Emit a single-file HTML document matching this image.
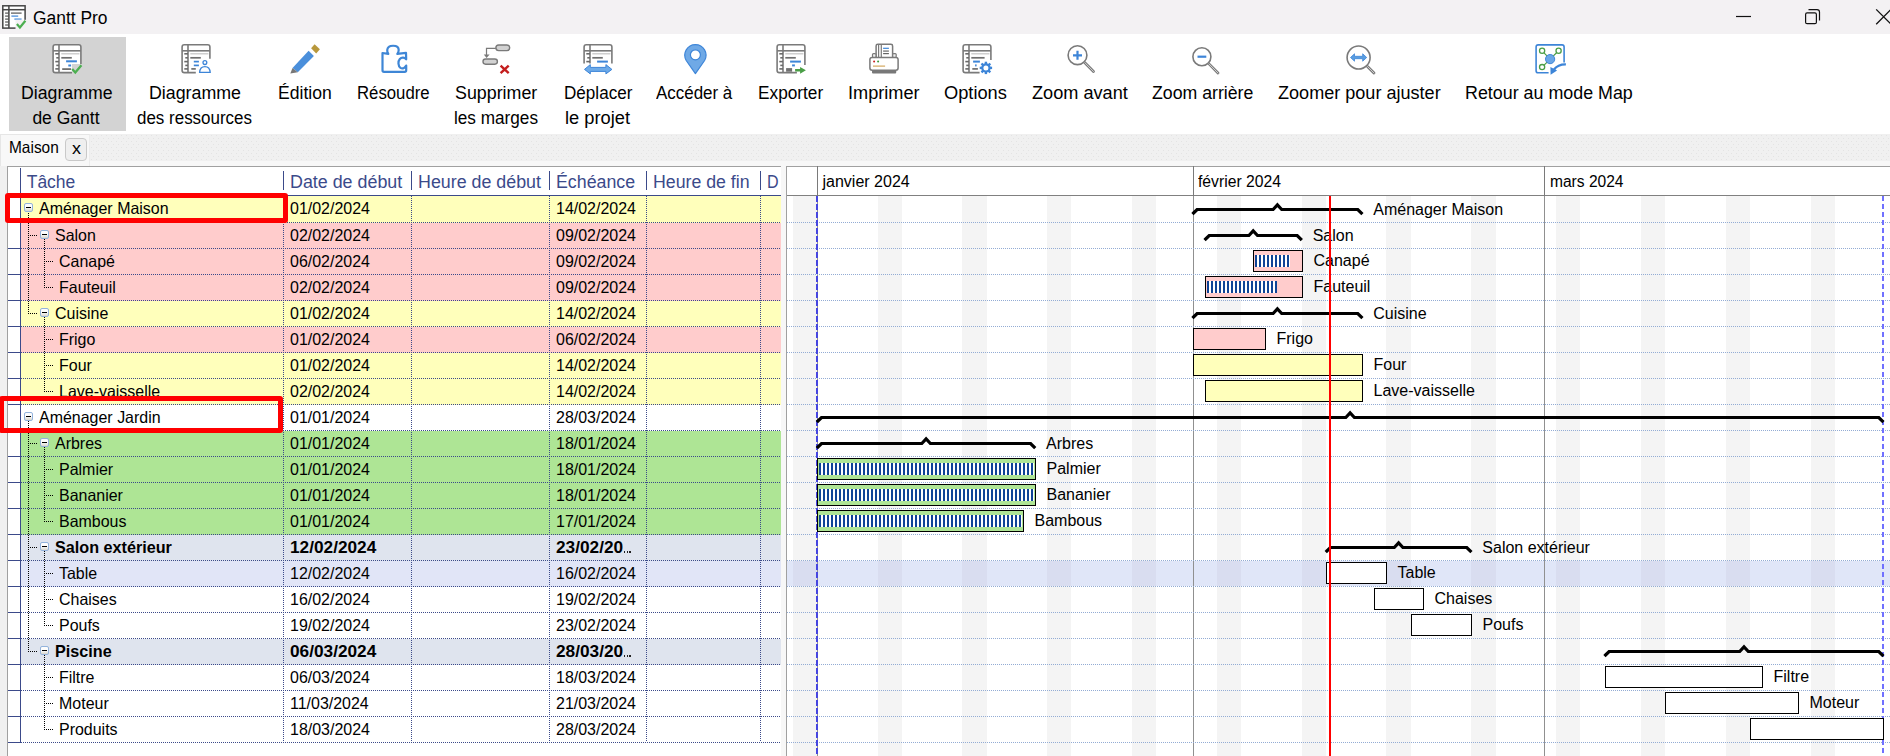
<!DOCTYPE html>
<html><head><meta charset="utf-8"><style>
html,body{margin:0;padding:0;width:1890px;height:756px;overflow:hidden;background:#fff;position:relative}
.t{position:absolute;font-family:"Liberation Sans",sans-serif;line-height:1;white-space:nowrap;transform-origin:0 0;z-index:5}
.mb{position:absolute;width:9px;height:9px;box-sizing:border-box;border:1px solid #93b3dc;border-radius:2px;background:linear-gradient(#fdfdfd 45%,#d9d6cc);z-index:2}
.mb::after{content:"";position:absolute;left:1px;top:3px;width:5px;height:1px;background:#000}
</style></head><body>
<div style="position:absolute;left:0px;top:0px;width:1890px;height:34px;background:#f3f1f3"></div>
<div class="t" style="left:32.60px;top:9.06px;font-size:18px;color:#000;transform:scaleX(0.9671);">Gantt Pro</div>
<div style="position:absolute;left:0px;top:34px;width:1890px;height:100px;background:#fff"></div>
<div style="position:absolute;left:9px;top:37px;width:117px;height:94px;background:#d3d3d3"></div>
<div class="t" style="left:21.15px;top:85.49px;font-size:17.5px;color:#000;transform:scaleX(1.0117);">Diagramme</div>
<div class="t" style="left:32.40px;top:110.49px;font-size:17.5px;color:#000;">de Gantt</div>
<div class="t" style="left:148.70px;top:85.49px;font-size:17.5px;color:#000;transform:scaleX(1.0172);">Diagramme</div>
<div class="t" style="left:137.40px;top:110.49px;font-size:17.5px;color:#000;transform:scaleX(0.9691);">des ressources</div>
<div class="t" style="left:277.85px;top:85.49px;font-size:17.5px;color:#000;transform:scaleX(1.0035);">Édition</div>
<div class="t" style="left:356.90px;top:85.49px;font-size:17.5px;color:#000;transform:scaleX(0.9568);">Résoudre</div>
<div class="t" style="left:455.35px;top:85.49px;font-size:17.5px;color:#000;transform:scaleX(1.0195);">Supprimer</div>
<div class="t" style="left:454.20px;top:110.49px;font-size:17.5px;color:#000;transform:scaleX(0.9814);">les marges</div>
<div class="t" style="left:563.60px;top:85.49px;font-size:17.5px;color:#000;transform:scaleX(0.9766);">Déplacer</div>
<div class="t" style="left:565.20px;top:110.49px;font-size:17.5px;color:#000;transform:scaleX(1.0440);">le projet</div>
<div class="t" style="left:656.35px;top:85.49px;font-size:17.5px;color:#000;transform:scaleX(0.9683);">Accéder à</div>
<div class="t" style="left:757.80px;top:85.49px;font-size:17.5px;color:#000;transform:scaleX(0.9858);">Exporter</div>
<div class="t" style="left:847.90px;top:85.49px;font-size:17.5px;color:#000;transform:scaleX(1.0372);">Imprimer</div>
<div class="t" style="left:944.45px;top:85.49px;font-size:17.5px;color:#000;transform:scaleX(1.0429);">Options</div>
<div class="t" style="left:1031.90px;top:85.49px;font-size:17.5px;color:#000;transform:scaleX(1.0367);">Zoom avant</div>
<div class="t" style="left:1151.95px;top:85.49px;font-size:17.5px;color:#000;transform:scaleX(1.0113);">Zoom arrière</div>
<div class="t" style="left:1277.85px;top:85.49px;font-size:17.5px;color:#000;transform:scaleX(1.0325);">Zoomer pour ajuster</div>
<div class="t" style="left:1465.20px;top:85.49px;font-size:17.5px;color:#000;transform:scaleX(1.0207);">Retour au mode Map</div>
<div style="position:absolute;left:0px;top:134px;width:1890px;height:32px;background:#f0f0f0"></div>
<div style="position:absolute;left:90px;top:161px;width:1800px;height:5px;background:#f7f7f7"></div>
<svg style="position:absolute;left:90px;top:134px" width="1800" height="27"><defs><pattern id="dp" width="5" height="6" patternUnits="userSpaceOnUse"><rect x="1" y="1" width="1" height="1" fill="#e3e3e3"/><rect x="3" y="4" width="1" height="1" fill="#e3e3e3"/></pattern></defs><rect width="1800" height="27" fill="url(#dp)"/></svg>
<div style="position:absolute;left:0px;top:134px;width:90px;height:32px;background:#f8f8f8;border-top:1px solid #e6e6e6;border-left:1px solid #e6e6e6;border-right:1px solid #ececec;box-sizing:border-box"></div>
<div class="t" style="left:8.60px;top:139.03px;font-size:16.5px;color:#000;transform:scaleX(0.9362);">Maison</div>
<div style="position:absolute;left:65px;top:138px;width:20px;height:21px;background:#efefef;border:1px solid #c9c9c9;border-radius:4px"></div>
<div class="t" style="left:71.50px;top:140.03px;font-size:16.5px;color:#000;transform:scaleX(1.0909);">x</div>
<div style="position:absolute;left:0px;top:166px;width:7px;height:590px;background:#f0f0f0"></div>
<div style="position:absolute;left:7px;top:166px;width:774px;height:1px;background:#a0a0a0"></div>
<div style="position:absolute;left:7px;top:166px;width:1px;height:590px;background:#a0a0a0"></div>
<div style="position:absolute;left:8px;top:167px;width:773px;height:589px;background:#fff"></div>
<div style="position:absolute;left:21px;top:196px;width:760px;height:27px;background:#ffffbb"></div>
<div style="position:absolute;left:21px;top:223px;width:760px;height:26px;background:#ffcccc"></div>
<div style="position:absolute;left:21px;top:249px;width:760px;height:26px;background:#ffcccc"></div>
<div style="position:absolute;left:21px;top:275px;width:760px;height:26px;background:#ffcccc"></div>
<div style="position:absolute;left:21px;top:301px;width:760px;height:26px;background:#ffffbb"></div>
<div style="position:absolute;left:21px;top:327px;width:760px;height:26px;background:#ffcccc"></div>
<div style="position:absolute;left:21px;top:353px;width:760px;height:26px;background:#ffffbb"></div>
<div style="position:absolute;left:21px;top:379px;width:760px;height:26px;background:#ffffbb"></div>
<div style="position:absolute;left:21px;top:405px;width:760px;height:26px;background:#ffffff"></div>
<div style="position:absolute;left:21px;top:431px;width:760px;height:26px;background:#aee595"></div>
<div style="position:absolute;left:21px;top:457px;width:760px;height:26px;background:#aee595"></div>
<div style="position:absolute;left:21px;top:483px;width:760px;height:26px;background:#aee595"></div>
<div style="position:absolute;left:21px;top:509px;width:760px;height:26px;background:#aee595"></div>
<div style="position:absolute;left:21px;top:535px;width:760px;height:26px;background:#dfe4ee"></div>
<div style="position:absolute;left:21px;top:561px;width:760px;height:26px;background:#e1e5f7"></div>
<div style="position:absolute;left:21px;top:587px;width:760px;height:26px;background:#ffffff"></div>
<div style="position:absolute;left:21px;top:613px;width:760px;height:26px;background:#ffffff"></div>
<div style="position:absolute;left:21px;top:639px;width:760px;height:26px;background:#dfe4ee"></div>
<div style="position:absolute;left:21px;top:665px;width:760px;height:26px;background:#ffffff"></div>
<div style="position:absolute;left:21px;top:691px;width:760px;height:26px;background:#ffffff"></div>
<div style="position:absolute;left:21px;top:717px;width:760px;height:26px;background:#ffffff"></div>
<div class="t" style="left:26.70px;top:173.89px;font-size:17.5px;color:#3b4a8a;">Tâche</div>
<div class="t" style="left:289.80px;top:173.89px;font-size:17.5px;color:#3b4a8a;transform:scaleX(1.0205);">Date de début</div>
<div class="t" style="left:417.80px;top:173.89px;font-size:17.5px;color:#3b4a8a;transform:scaleX(1.0195);">Heure de début</div>
<div class="t" style="left:555.70px;top:173.89px;font-size:17.5px;color:#3b4a8a;transform:scaleX(1.0162);">Échéance</div>
<div class="t" style="left:653.00px;top:173.89px;font-size:17.5px;color:#3b4a8a;transform:scaleX(1.0132);">Heure de fin</div>
<div class="t" style="left:766.60px;top:173.89px;font-size:17.5px;color:#3b4a8a;transform:scaleX(0.9178);">D</div>
<div style="position:absolute;left:283px;top:171px;width:1px;height:19px;background:#3b4a8a"></div>
<div style="position:absolute;left:411px;top:171px;width:1px;height:19px;background:#3b4a8a"></div>
<div style="position:absolute;left:549px;top:171px;width:1px;height:19px;background:#3b4a8a"></div>
<div style="position:absolute;left:646px;top:171px;width:1px;height:19px;background:#3b4a8a"></div>
<div style="position:absolute;left:760px;top:171px;width:1px;height:19px;background:#3b4a8a"></div>
<div style="position:absolute;left:8px;top:195px;width:773px;height:1px;background:#3b4a8a"></div>
<div style="position:absolute;left:20px;top:168px;width:1px;height:575px;background:#3b4a8a"></div>
<div style="position:absolute;left:21px;top:222px;width:760px;height:1px;background-image:linear-gradient(90deg,#3b4a8a 50%,transparent 50%);background-size:2px 1px"></div>
<div style="position:absolute;left:8px;top:222px;width:12px;height:1px;background:#3b4a8a"></div>
<div style="position:absolute;left:21px;top:248px;width:760px;height:1px;background-image:linear-gradient(90deg,#3b4a8a 50%,transparent 50%);background-size:2px 1px"></div>
<div style="position:absolute;left:8px;top:248px;width:12px;height:1px;background:#3b4a8a"></div>
<div style="position:absolute;left:21px;top:274px;width:760px;height:1px;background-image:linear-gradient(90deg,#3b4a8a 50%,transparent 50%);background-size:2px 1px"></div>
<div style="position:absolute;left:8px;top:274px;width:12px;height:1px;background:#3b4a8a"></div>
<div style="position:absolute;left:21px;top:300px;width:760px;height:1px;background-image:linear-gradient(90deg,#3b4a8a 50%,transparent 50%);background-size:2px 1px"></div>
<div style="position:absolute;left:8px;top:300px;width:12px;height:1px;background:#3b4a8a"></div>
<div style="position:absolute;left:21px;top:326px;width:760px;height:1px;background-image:linear-gradient(90deg,#3b4a8a 50%,transparent 50%);background-size:2px 1px"></div>
<div style="position:absolute;left:8px;top:326px;width:12px;height:1px;background:#3b4a8a"></div>
<div style="position:absolute;left:21px;top:352px;width:760px;height:1px;background-image:linear-gradient(90deg,#3b4a8a 50%,transparent 50%);background-size:2px 1px"></div>
<div style="position:absolute;left:8px;top:352px;width:12px;height:1px;background:#3b4a8a"></div>
<div style="position:absolute;left:21px;top:378px;width:760px;height:1px;background-image:linear-gradient(90deg,#3b4a8a 50%,transparent 50%);background-size:2px 1px"></div>
<div style="position:absolute;left:8px;top:378px;width:12px;height:1px;background:#3b4a8a"></div>
<div style="position:absolute;left:21px;top:404px;width:760px;height:1px;background-image:linear-gradient(90deg,#3b4a8a 50%,transparent 50%);background-size:2px 1px"></div>
<div style="position:absolute;left:8px;top:404px;width:12px;height:1px;background:#3b4a8a"></div>
<div style="position:absolute;left:21px;top:430px;width:760px;height:1px;background-image:linear-gradient(90deg,#3b4a8a 50%,transparent 50%);background-size:2px 1px"></div>
<div style="position:absolute;left:8px;top:430px;width:12px;height:1px;background:#3b4a8a"></div>
<div style="position:absolute;left:21px;top:456px;width:760px;height:1px;background-image:linear-gradient(90deg,#3b4a8a 50%,transparent 50%);background-size:2px 1px"></div>
<div style="position:absolute;left:8px;top:456px;width:12px;height:1px;background:#3b4a8a"></div>
<div style="position:absolute;left:21px;top:482px;width:760px;height:1px;background-image:linear-gradient(90deg,#3b4a8a 50%,transparent 50%);background-size:2px 1px"></div>
<div style="position:absolute;left:8px;top:482px;width:12px;height:1px;background:#3b4a8a"></div>
<div style="position:absolute;left:21px;top:508px;width:760px;height:1px;background-image:linear-gradient(90deg,#3b4a8a 50%,transparent 50%);background-size:2px 1px"></div>
<div style="position:absolute;left:8px;top:508px;width:12px;height:1px;background:#3b4a8a"></div>
<div style="position:absolute;left:21px;top:534px;width:760px;height:1px;background-image:linear-gradient(90deg,#3b4a8a 50%,transparent 50%);background-size:2px 1px"></div>
<div style="position:absolute;left:8px;top:534px;width:12px;height:1px;background:#3b4a8a"></div>
<div style="position:absolute;left:21px;top:560px;width:760px;height:1px;background-image:linear-gradient(90deg,#3b4a8a 50%,transparent 50%);background-size:2px 1px"></div>
<div style="position:absolute;left:8px;top:560px;width:12px;height:1px;background:#3b4a8a"></div>
<div style="position:absolute;left:21px;top:586px;width:760px;height:1px;background-image:linear-gradient(90deg,#3b4a8a 50%,transparent 50%);background-size:2px 1px"></div>
<div style="position:absolute;left:8px;top:586px;width:12px;height:1px;background:#3b4a8a"></div>
<div style="position:absolute;left:21px;top:612px;width:760px;height:1px;background-image:linear-gradient(90deg,#3b4a8a 50%,transparent 50%);background-size:2px 1px"></div>
<div style="position:absolute;left:8px;top:612px;width:12px;height:1px;background:#3b4a8a"></div>
<div style="position:absolute;left:21px;top:638px;width:760px;height:1px;background-image:linear-gradient(90deg,#3b4a8a 50%,transparent 50%);background-size:2px 1px"></div>
<div style="position:absolute;left:8px;top:638px;width:12px;height:1px;background:#3b4a8a"></div>
<div style="position:absolute;left:21px;top:664px;width:760px;height:1px;background-image:linear-gradient(90deg,#3b4a8a 50%,transparent 50%);background-size:2px 1px"></div>
<div style="position:absolute;left:8px;top:664px;width:12px;height:1px;background:#3b4a8a"></div>
<div style="position:absolute;left:21px;top:690px;width:760px;height:1px;background-image:linear-gradient(90deg,#3b4a8a 50%,transparent 50%);background-size:2px 1px"></div>
<div style="position:absolute;left:8px;top:690px;width:12px;height:1px;background:#3b4a8a"></div>
<div style="position:absolute;left:21px;top:716px;width:760px;height:1px;background-image:linear-gradient(90deg,#3b4a8a 50%,transparent 50%);background-size:2px 1px"></div>
<div style="position:absolute;left:8px;top:716px;width:12px;height:1px;background:#3b4a8a"></div>
<div style="position:absolute;left:21px;top:742px;width:760px;height:1px;background-image:linear-gradient(90deg,#3b4a8a 50%,transparent 50%);background-size:2px 1px"></div>
<div style="position:absolute;left:8px;top:742px;width:12px;height:1px;background:#3b4a8a"></div>
<div style="position:absolute;left:283px;top:196px;width:1px;height:546px;background-image:linear-gradient(180deg,#3b4a8a 50%,transparent 50%);background-size:1px 2px"></div>
<div style="position:absolute;left:411px;top:196px;width:1px;height:546px;background-image:linear-gradient(180deg,#3b4a8a 50%,transparent 50%);background-size:1px 2px"></div>
<div style="position:absolute;left:549px;top:196px;width:1px;height:546px;background-image:linear-gradient(180deg,#3b4a8a 50%,transparent 50%);background-size:1px 2px"></div>
<div style="position:absolute;left:646px;top:196px;width:1px;height:546px;background-image:linear-gradient(180deg,#3b4a8a 50%,transparent 50%);background-size:1px 2px"></div>
<div style="position:absolute;left:760px;top:196px;width:1px;height:546px;background-image:linear-gradient(180deg,#3b4a8a 50%,transparent 50%);background-size:1px 2px"></div>
<div style="position:absolute;left:28px;top:213px;width:1px;height:100px;background-image:linear-gradient(180deg,#000 50%,transparent 50%);background-size:1px 2px"></div>
<div style="position:absolute;left:28px;top:234.5px;width:10px;height:1px;background-image:linear-gradient(90deg,#000 50%,transparent 50%);background-size:2px 1px"></div>
<div style="position:absolute;left:28px;top:312.5px;width:10px;height:1px;background-image:linear-gradient(90deg,#000 50%,transparent 50%);background-size:2px 1px"></div>
<div style="position:absolute;left:44px;top:239px;width:1px;height:48px;background-image:linear-gradient(180deg,#000 50%,transparent 50%);background-size:1px 2px"></div>
<div style="position:absolute;left:44px;top:260.5px;width:10px;height:1px;background-image:linear-gradient(90deg,#000 50%,transparent 50%);background-size:2px 1px"></div>
<div style="position:absolute;left:44px;top:286.5px;width:10px;height:1px;background-image:linear-gradient(90deg,#000 50%,transparent 50%);background-size:2px 1px"></div>
<div style="position:absolute;left:44px;top:317px;width:1px;height:74px;background-image:linear-gradient(180deg,#000 50%,transparent 50%);background-size:1px 2px"></div>
<div style="position:absolute;left:44px;top:338.5px;width:10px;height:1px;background-image:linear-gradient(90deg,#000 50%,transparent 50%);background-size:2px 1px"></div>
<div style="position:absolute;left:44px;top:364.5px;width:10px;height:1px;background-image:linear-gradient(90deg,#000 50%,transparent 50%);background-size:2px 1px"></div>
<div style="position:absolute;left:44px;top:390.5px;width:10px;height:1px;background-image:linear-gradient(90deg,#000 50%,transparent 50%);background-size:2px 1px"></div>
<div style="position:absolute;left:28px;top:421px;width:1px;height:230px;background-image:linear-gradient(180deg,#000 50%,transparent 50%);background-size:1px 2px"></div>
<div style="position:absolute;left:28px;top:442.5px;width:10px;height:1px;background-image:linear-gradient(90deg,#000 50%,transparent 50%);background-size:2px 1px"></div>
<div style="position:absolute;left:28px;top:546.5px;width:10px;height:1px;background-image:linear-gradient(90deg,#000 50%,transparent 50%);background-size:2px 1px"></div>
<div style="position:absolute;left:28px;top:650.5px;width:10px;height:1px;background-image:linear-gradient(90deg,#000 50%,transparent 50%);background-size:2px 1px"></div>
<div style="position:absolute;left:44px;top:447px;width:1px;height:74px;background-image:linear-gradient(180deg,#000 50%,transparent 50%);background-size:1px 2px"></div>
<div style="position:absolute;left:44px;top:468.5px;width:10px;height:1px;background-image:linear-gradient(90deg,#000 50%,transparent 50%);background-size:2px 1px"></div>
<div style="position:absolute;left:44px;top:494.5px;width:10px;height:1px;background-image:linear-gradient(90deg,#000 50%,transparent 50%);background-size:2px 1px"></div>
<div style="position:absolute;left:44px;top:520.5px;width:10px;height:1px;background-image:linear-gradient(90deg,#000 50%,transparent 50%);background-size:2px 1px"></div>
<div style="position:absolute;left:44px;top:551px;width:1px;height:74px;background-image:linear-gradient(180deg,#000 50%,transparent 50%);background-size:1px 2px"></div>
<div style="position:absolute;left:44px;top:572.5px;width:10px;height:1px;background-image:linear-gradient(90deg,#000 50%,transparent 50%);background-size:2px 1px"></div>
<div style="position:absolute;left:44px;top:598.5px;width:10px;height:1px;background-image:linear-gradient(90deg,#000 50%,transparent 50%);background-size:2px 1px"></div>
<div style="position:absolute;left:44px;top:624.5px;width:10px;height:1px;background-image:linear-gradient(90deg,#000 50%,transparent 50%);background-size:2px 1px"></div>
<div style="position:absolute;left:44px;top:655px;width:1px;height:74px;background-image:linear-gradient(180deg,#000 50%,transparent 50%);background-size:1px 2px"></div>
<div style="position:absolute;left:44px;top:676.5px;width:10px;height:1px;background-image:linear-gradient(90deg,#000 50%,transparent 50%);background-size:2px 1px"></div>
<div style="position:absolute;left:44px;top:702.5px;width:10px;height:1px;background-image:linear-gradient(90deg,#000 50%,transparent 50%);background-size:2px 1px"></div>
<div style="position:absolute;left:44px;top:728.5px;width:10px;height:1px;background-image:linear-gradient(90deg,#000 50%,transparent 50%);background-size:2px 1px"></div>
<div class="mb" style="left:24px;top:203px"></div>
<div class="t" style="left:38.50px;top:200.03px;font-size:16.5px;color:#000;transform:scaleX(0.9680);">Aménager Maison</div>
<div class="t" style="left:289.80px;top:200.03px;font-size:16.5px;color:#000;transform:scaleX(0.9680);">01/02/2024</div>
<div class="t" style="left:555.70px;top:200.03px;font-size:16.5px;color:#000;transform:scaleX(0.9680);">14/02/2024</div>
<div class="mb" style="left:40px;top:230px"></div>
<div class="t" style="left:54.50px;top:227.03px;font-size:16.5px;color:#000;transform:scaleX(0.9680);">Salon</div>
<div class="t" style="left:289.80px;top:227.03px;font-size:16.5px;color:#000;transform:scaleX(0.9680);">02/02/2024</div>
<div class="t" style="left:555.70px;top:227.03px;font-size:16.5px;color:#000;transform:scaleX(0.9680);">09/02/2024</div>
<div class="t" style="left:58.50px;top:253.03px;font-size:16.5px;color:#000;transform:scaleX(0.9680);">Canapé</div>
<div class="t" style="left:289.80px;top:253.03px;font-size:16.5px;color:#000;transform:scaleX(0.9680);">06/02/2024</div>
<div class="t" style="left:555.70px;top:253.03px;font-size:16.5px;color:#000;transform:scaleX(0.9680);">09/02/2024</div>
<div class="t" style="left:58.50px;top:279.03px;font-size:16.5px;color:#000;transform:scaleX(0.9680);">Fauteuil</div>
<div class="t" style="left:289.80px;top:279.03px;font-size:16.5px;color:#000;transform:scaleX(0.9680);">02/02/2024</div>
<div class="t" style="left:555.70px;top:279.03px;font-size:16.5px;color:#000;transform:scaleX(0.9680);">09/02/2024</div>
<div class="mb" style="left:40px;top:308px"></div>
<div class="t" style="left:54.50px;top:305.03px;font-size:16.5px;color:#000;transform:scaleX(0.9680);">Cuisine</div>
<div class="t" style="left:289.80px;top:305.03px;font-size:16.5px;color:#000;transform:scaleX(0.9680);">01/02/2024</div>
<div class="t" style="left:555.70px;top:305.03px;font-size:16.5px;color:#000;transform:scaleX(0.9680);">14/02/2024</div>
<div class="t" style="left:58.50px;top:331.03px;font-size:16.5px;color:#000;transform:scaleX(0.9680);">Frigo</div>
<div class="t" style="left:289.80px;top:331.03px;font-size:16.5px;color:#000;transform:scaleX(0.9680);">01/02/2024</div>
<div class="t" style="left:555.70px;top:331.03px;font-size:16.5px;color:#000;transform:scaleX(0.9680);">06/02/2024</div>
<div class="t" style="left:58.50px;top:357.03px;font-size:16.5px;color:#000;transform:scaleX(0.9680);">Four</div>
<div class="t" style="left:289.80px;top:357.03px;font-size:16.5px;color:#000;transform:scaleX(0.9680);">01/02/2024</div>
<div class="t" style="left:555.70px;top:357.03px;font-size:16.5px;color:#000;transform:scaleX(0.9680);">14/02/2024</div>
<div class="t" style="left:58.50px;top:383.03px;font-size:16.5px;color:#000;transform:scaleX(0.9680);">Lave-vaisselle</div>
<div class="t" style="left:289.80px;top:383.03px;font-size:16.5px;color:#000;transform:scaleX(0.9680);">02/02/2024</div>
<div class="t" style="left:555.70px;top:383.03px;font-size:16.5px;color:#000;transform:scaleX(0.9680);">14/02/2024</div>
<div class="mb" style="left:24px;top:412px"></div>
<div class="t" style="left:38.50px;top:409.03px;font-size:16.5px;color:#000;transform:scaleX(0.9680);">Aménager Jardin</div>
<div class="t" style="left:289.80px;top:409.03px;font-size:16.5px;color:#000;transform:scaleX(0.9680);">01/01/2024</div>
<div class="t" style="left:555.70px;top:409.03px;font-size:16.5px;color:#000;transform:scaleX(0.9680);">28/03/2024</div>
<div class="mb" style="left:40px;top:438px"></div>
<div class="t" style="left:54.50px;top:435.03px;font-size:16.5px;color:#000;transform:scaleX(0.9680);">Arbres</div>
<div class="t" style="left:289.80px;top:435.03px;font-size:16.5px;color:#000;transform:scaleX(0.9680);">01/01/2024</div>
<div class="t" style="left:555.70px;top:435.03px;font-size:16.5px;color:#000;transform:scaleX(0.9680);">18/01/2024</div>
<div class="t" style="left:58.50px;top:461.03px;font-size:16.5px;color:#000;transform:scaleX(0.9680);">Palmier</div>
<div class="t" style="left:289.80px;top:461.03px;font-size:16.5px;color:#000;transform:scaleX(0.9680);">01/01/2024</div>
<div class="t" style="left:555.70px;top:461.03px;font-size:16.5px;color:#000;transform:scaleX(0.9680);">18/01/2024</div>
<div class="t" style="left:58.50px;top:487.03px;font-size:16.5px;color:#000;transform:scaleX(0.9680);">Bananier</div>
<div class="t" style="left:289.80px;top:487.03px;font-size:16.5px;color:#000;transform:scaleX(0.9680);">01/01/2024</div>
<div class="t" style="left:555.70px;top:487.03px;font-size:16.5px;color:#000;transform:scaleX(0.9680);">18/01/2024</div>
<div class="t" style="left:58.50px;top:513.03px;font-size:16.5px;color:#000;transform:scaleX(0.9680);">Bambous</div>
<div class="t" style="left:289.80px;top:513.03px;font-size:16.5px;color:#000;transform:scaleX(0.9680);">01/01/2024</div>
<div class="t" style="left:555.70px;top:513.03px;font-size:16.5px;color:#000;transform:scaleX(0.9680);">17/01/2024</div>
<div class="mb" style="left:40px;top:542px"></div>
<div class="t" style="left:54.50px;top:539.03px;font-size:16.5px;color:#000;font-weight:700;transform:scaleX(0.9800);">Salon extérieur</div>
<div class="t" style="left:289.80px;top:539.03px;font-size:16.5px;color:#000;font-weight:700;transform:scaleX(1.0450);">12/02/2024</div>
<div class="t" style="left:555.70px;top:539.03px;font-size:16.5px;color:#000;font-weight:700;transform:scaleX(1.0450);">23/02/20</div>
<div style="position:absolute;left:624.019125390625px;top:551.4px;width:1.4px;height:1.5px;background:#222;z-index:5"></div>
<div style="position:absolute;left:626.6191253906251px;top:551.4px;width:1.4px;height:1.5px;background:#222;z-index:5"></div>
<div style="position:absolute;left:629.2191253906251px;top:551.4px;width:1.4px;height:1.5px;background:#222;z-index:5"></div>
<div class="t" style="left:58.50px;top:565.03px;font-size:16.5px;color:#000;transform:scaleX(0.9680);">Table</div>
<div class="t" style="left:289.80px;top:565.03px;font-size:16.5px;color:#000;transform:scaleX(0.9680);">12/02/2024</div>
<div class="t" style="left:555.70px;top:565.03px;font-size:16.5px;color:#000;transform:scaleX(0.9680);">16/02/2024</div>
<div class="t" style="left:58.50px;top:591.03px;font-size:16.5px;color:#000;transform:scaleX(0.9680);">Chaises</div>
<div class="t" style="left:289.80px;top:591.03px;font-size:16.5px;color:#000;transform:scaleX(0.9680);">16/02/2024</div>
<div class="t" style="left:555.70px;top:591.03px;font-size:16.5px;color:#000;transform:scaleX(0.9680);">19/02/2024</div>
<div class="t" style="left:58.50px;top:617.03px;font-size:16.5px;color:#000;transform:scaleX(0.9680);">Poufs</div>
<div class="t" style="left:289.80px;top:617.03px;font-size:16.5px;color:#000;transform:scaleX(0.9680);">19/02/2024</div>
<div class="t" style="left:555.70px;top:617.03px;font-size:16.5px;color:#000;transform:scaleX(0.9680);">23/02/2024</div>
<div class="mb" style="left:40px;top:646px"></div>
<div class="t" style="left:54.50px;top:643.03px;font-size:16.5px;color:#000;font-weight:700;transform:scaleX(0.9800);">Piscine</div>
<div class="t" style="left:289.80px;top:643.03px;font-size:16.5px;color:#000;font-weight:700;transform:scaleX(1.0450);">06/03/2024</div>
<div class="t" style="left:555.70px;top:643.03px;font-size:16.5px;color:#000;font-weight:700;transform:scaleX(1.0450);">28/03/20</div>
<div style="position:absolute;left:624.019125390625px;top:655.4px;width:1.4px;height:1.5px;background:#222;z-index:5"></div>
<div style="position:absolute;left:626.6191253906251px;top:655.4px;width:1.4px;height:1.5px;background:#222;z-index:5"></div>
<div style="position:absolute;left:629.2191253906251px;top:655.4px;width:1.4px;height:1.5px;background:#222;z-index:5"></div>
<div class="t" style="left:58.50px;top:669.03px;font-size:16.5px;color:#000;transform:scaleX(0.9680);">Filtre</div>
<div class="t" style="left:289.80px;top:669.03px;font-size:16.5px;color:#000;transform:scaleX(0.9680);">06/03/2024</div>
<div class="t" style="left:555.70px;top:669.03px;font-size:16.5px;color:#000;transform:scaleX(0.9680);">18/03/2024</div>
<div class="t" style="left:58.50px;top:695.03px;font-size:16.5px;color:#000;transform:scaleX(0.9680);">Moteur</div>
<div class="t" style="left:289.80px;top:695.03px;font-size:16.5px;color:#000;transform:scaleX(0.9680);">11/03/2024</div>
<div class="t" style="left:555.70px;top:695.03px;font-size:16.5px;color:#000;transform:scaleX(0.9680);">21/03/2024</div>
<div class="t" style="left:58.50px;top:721.03px;font-size:16.5px;color:#000;transform:scaleX(0.9680);">Produits</div>
<div class="t" style="left:289.80px;top:721.03px;font-size:16.5px;color:#000;transform:scaleX(0.9680);">18/03/2024</div>
<div class="t" style="left:555.70px;top:721.03px;font-size:16.5px;color:#000;transform:scaleX(0.9680);">28/03/2024</div>
<div style="position:absolute;left:5px;top:193px;width:283px;height:30px;border:5px solid #f00;border-radius:3px;box-sizing:border-box;z-index:8"></div>
<div style="position:absolute;left:-1px;top:396px;width:284px;height:37px;border:5px solid #f00;border-radius:3px;box-sizing:border-box;z-index:8"></div>
<div style="position:absolute;left:781px;top:166px;width:5px;height:590px;background:#f7f7f7"></div>
<div style="position:absolute;left:786px;top:166px;width:1px;height:590px;background:#a0a0a0"></div>
<div style="position:absolute;left:787px;top:167px;width:1103px;height:589px;background:#fff"></div>
<div style="position:absolute;left:787px;top:166px;width:1103px;height:1px;background:#a0a0a0"></div>
<div style="position:absolute;left:787px;top:195px;width:1103px;height:1px;background:#808080"></div>
<div style="position:absolute;left:793px;top:196px;width:24px;height:560px;background:#f4f4f4"></div>
<div style="position:absolute;left:878px;top:196px;width:24px;height:560px;background:#f4f4f4"></div>
<div style="position:absolute;left:962px;top:196px;width:25px;height:560px;background:#f4f4f4"></div>
<div style="position:absolute;left:1047px;top:196px;width:24px;height:560px;background:#f4f4f4"></div>
<div style="position:absolute;left:1132px;top:196px;width:24px;height:560px;background:#f4f4f4"></div>
<div style="position:absolute;left:1217px;top:196px;width:24px;height:560px;background:#f4f4f4"></div>
<div style="position:absolute;left:1302px;top:196px;width:24px;height:560px;background:#f4f4f4"></div>
<div style="position:absolute;left:1386px;top:196px;width:25px;height:560px;background:#f4f4f4"></div>
<div style="position:absolute;left:1471px;top:196px;width:25px;height:560px;background:#f4f4f4"></div>
<div style="position:absolute;left:1556px;top:196px;width:24px;height:560px;background:#f4f4f4"></div>
<div style="position:absolute;left:1641px;top:196px;width:24px;height:560px;background:#f4f4f4"></div>
<div style="position:absolute;left:1726px;top:196px;width:24px;height:560px;background:#f4f4f4"></div>
<div style="position:absolute;left:1811px;top:196px;width:24px;height:560px;background:#f4f4f4"></div>
<div style="position:absolute;left:1895px;top:196px;width:25px;height:560px;background:#f4f4f4"></div>
<div style="position:absolute;left:787px;top:561px;width:1103px;height:25px;background:#e0e6f8"></div>
<div style="position:absolute;left:793px;top:561px;width:24px;height:25px;background:#d9ddf0"></div>
<div style="position:absolute;left:878px;top:561px;width:24px;height:25px;background:#d9ddf0"></div>
<div style="position:absolute;left:962px;top:561px;width:25px;height:25px;background:#d9ddf0"></div>
<div style="position:absolute;left:1047px;top:561px;width:24px;height:25px;background:#d9ddf0"></div>
<div style="position:absolute;left:1132px;top:561px;width:24px;height:25px;background:#d9ddf0"></div>
<div style="position:absolute;left:1217px;top:561px;width:24px;height:25px;background:#d9ddf0"></div>
<div style="position:absolute;left:1302px;top:561px;width:24px;height:25px;background:#d9ddf0"></div>
<div style="position:absolute;left:1386px;top:561px;width:25px;height:25px;background:#d9ddf0"></div>
<div style="position:absolute;left:1471px;top:561px;width:25px;height:25px;background:#d9ddf0"></div>
<div style="position:absolute;left:1556px;top:561px;width:24px;height:25px;background:#d9ddf0"></div>
<div style="position:absolute;left:1641px;top:561px;width:24px;height:25px;background:#d9ddf0"></div>
<div style="position:absolute;left:1726px;top:561px;width:24px;height:25px;background:#d9ddf0"></div>
<div style="position:absolute;left:1811px;top:561px;width:24px;height:25px;background:#d9ddf0"></div>
<div style="position:absolute;left:1895px;top:561px;width:25px;height:25px;background:#d9ddf0"></div>
<div style="position:absolute;left:817px;top:166px;width:1px;height:30px;background:#7a7a7a"></div>
<div style="position:absolute;left:1193px;top:166px;width:1px;height:30px;background:#7a7a7a"></div>
<div style="position:absolute;left:1544px;top:166px;width:1px;height:30px;background:#7a7a7a"></div>
<div style="position:absolute;left:1193px;top:196px;width:1px;height:560px;background:#909090"></div>
<div style="position:absolute;left:1544px;top:196px;width:1px;height:560px;background:#909090"></div>
<div style="position:absolute;left:817px;top:196px;width:1px;height:560px;background:#909090"></div>
<div class="t" style="left:822.50px;top:174.26px;font-size:16px;color:#000;">janvier 2024</div>
<div class="t" style="left:1198.00px;top:174.26px;font-size:16px;color:#000;transform:scaleX(0.9823);">février 2024</div>
<div class="t" style="left:1549.50px;top:174.26px;font-size:16px;color:#000;transform:scaleX(0.9723);">mars 2024</div>
<div style="position:absolute;left:787px;top:222px;width:1103px;height:1px;background-image:linear-gradient(90deg,#93acd4 50%,transparent 50%);background-size:2px 1px"></div>
<div style="position:absolute;left:787px;top:248px;width:1103px;height:1px;background-image:linear-gradient(90deg,#93acd4 50%,transparent 50%);background-size:2px 1px"></div>
<div style="position:absolute;left:787px;top:274px;width:1103px;height:1px;background-image:linear-gradient(90deg,#93acd4 50%,transparent 50%);background-size:2px 1px"></div>
<div style="position:absolute;left:787px;top:300px;width:1103px;height:1px;background-image:linear-gradient(90deg,#93acd4 50%,transparent 50%);background-size:2px 1px"></div>
<div style="position:absolute;left:787px;top:326px;width:1103px;height:1px;background-image:linear-gradient(90deg,#93acd4 50%,transparent 50%);background-size:2px 1px"></div>
<div style="position:absolute;left:787px;top:352px;width:1103px;height:1px;background-image:linear-gradient(90deg,#93acd4 50%,transparent 50%);background-size:2px 1px"></div>
<div style="position:absolute;left:787px;top:378px;width:1103px;height:1px;background-image:linear-gradient(90deg,#93acd4 50%,transparent 50%);background-size:2px 1px"></div>
<div style="position:absolute;left:787px;top:404px;width:1103px;height:1px;background-image:linear-gradient(90deg,#93acd4 50%,transparent 50%);background-size:2px 1px"></div>
<div style="position:absolute;left:787px;top:430px;width:1103px;height:1px;background-image:linear-gradient(90deg,#93acd4 50%,transparent 50%);background-size:2px 1px"></div>
<div style="position:absolute;left:787px;top:456px;width:1103px;height:1px;background-image:linear-gradient(90deg,#93acd4 50%,transparent 50%);background-size:2px 1px"></div>
<div style="position:absolute;left:787px;top:482px;width:1103px;height:1px;background-image:linear-gradient(90deg,#93acd4 50%,transparent 50%);background-size:2px 1px"></div>
<div style="position:absolute;left:787px;top:508px;width:1103px;height:1px;background-image:linear-gradient(90deg,#93acd4 50%,transparent 50%);background-size:2px 1px"></div>
<div style="position:absolute;left:787px;top:534px;width:1103px;height:1px;background-image:linear-gradient(90deg,#93acd4 50%,transparent 50%);background-size:2px 1px"></div>
<div style="position:absolute;left:787px;top:560px;width:1103px;height:1px;background-image:linear-gradient(90deg,#93acd4 50%,transparent 50%);background-size:2px 1px"></div>
<div style="position:absolute;left:787px;top:586px;width:1103px;height:1px;background-image:linear-gradient(90deg,#93acd4 50%,transparent 50%);background-size:2px 1px"></div>
<div style="position:absolute;left:787px;top:612px;width:1103px;height:1px;background-image:linear-gradient(90deg,#93acd4 50%,transparent 50%);background-size:2px 1px"></div>
<div style="position:absolute;left:787px;top:638px;width:1103px;height:1px;background-image:linear-gradient(90deg,#93acd4 50%,transparent 50%);background-size:2px 1px"></div>
<div style="position:absolute;left:787px;top:664px;width:1103px;height:1px;background-image:linear-gradient(90deg,#93acd4 50%,transparent 50%);background-size:2px 1px"></div>
<div style="position:absolute;left:787px;top:690px;width:1103px;height:1px;background-image:linear-gradient(90deg,#93acd4 50%,transparent 50%);background-size:2px 1px"></div>
<div style="position:absolute;left:787px;top:716px;width:1103px;height:1px;background-image:linear-gradient(90deg,#93acd4 50%,transparent 50%);background-size:2px 1px"></div>
<div style="position:absolute;left:787px;top:742px;width:1103px;height:1px;background-image:linear-gradient(90deg,#93acd4 50%,transparent 50%);background-size:2px 1px"></div>
<div style="position:absolute;left:816px;top:196px;width:2px;height:560px;background-image:linear-gradient(180deg,#4646e0 75%,transparent 75%);background-size:2px 8px"></div>
<div style="position:absolute;left:1882px;top:196px;width:2px;height:560px;background-image:linear-gradient(180deg,#7070ff 62%,transparent 62%);background-size:2px 8px"></div>
<div class="t" style="left:1373.26px;top:201.66px;font-size:16px;color:#000;">Aménager Maison</div>
<div class="t" style="left:1312.68px;top:227.66px;font-size:16px;color:#000;">Salon</div>
<div style="position:absolute;left:1253px;top:250px;width:50px;height:22px;background:#ffcccc;border:1px solid #000;box-sizing:border-box"></div>
<div style="position:absolute;left:1255px;top:255px;width:35px;height:12px;background-image:linear-gradient(90deg,#0f4496 50%,#fff 50%);background-size:4px 12px"></div>
<div class="t" style="left:1313.50px;top:252.76px;font-size:16px;color:#000;">Canapé</div>
<div style="position:absolute;left:1205px;top:276px;width:98px;height:22px;background:#ffcccc;border:1px solid #000;box-sizing:border-box"></div>
<div style="position:absolute;left:1207px;top:281px;width:70px;height:12px;background-image:linear-gradient(90deg,#0f4496 50%,#fff 50%);background-size:4px 12px"></div>
<div class="t" style="left:1313.50px;top:278.76px;font-size:16px;color:#000;">Fauteuil</div>
<div class="t" style="left:1373.26px;top:305.66px;font-size:16px;color:#000;">Cuisine</div>
<div style="position:absolute;left:1193px;top:328px;width:73px;height:22px;background:#ffcccc;border:1px solid #000;box-sizing:border-box"></div>
<div class="t" style="left:1276.50px;top:330.76px;font-size:16px;color:#000;">Frigo</div>
<div style="position:absolute;left:1193px;top:354px;width:170px;height:22px;background:#ffffbb;border:1px solid #000;box-sizing:border-box"></div>
<div class="t" style="left:1373.50px;top:356.76px;font-size:16px;color:#000;">Four</div>
<div style="position:absolute;left:1205px;top:380px;width:158px;height:22px;background:#ffffbb;border:1px solid #000;box-sizing:border-box"></div>
<div class="t" style="left:1373.50px;top:382.76px;font-size:16px;color:#000;">Lave-vaisselle</div>
<div class="t" style="left:1894.30px;top:409.66px;font-size:16px;color:#000;">Aménager Jardin</div>
<div class="t" style="left:1046.11px;top:435.66px;font-size:16px;color:#000;">Arbres</div>
<div style="position:absolute;left:817px;top:458px;width:219px;height:22px;background:#aee595;border:1px solid #000;box-sizing:border-box"></div>
<div style="position:absolute;left:819px;top:463px;width:215px;height:12px;background-image:linear-gradient(90deg,#0f4496 50%,#fff 50%);background-size:4px 12px"></div>
<div class="t" style="left:1046.50px;top:460.76px;font-size:16px;color:#000;">Palmier</div>
<div style="position:absolute;left:817px;top:484px;width:219px;height:22px;background:#aee595;border:1px solid #000;box-sizing:border-box"></div>
<div style="position:absolute;left:819px;top:489px;width:215px;height:12px;background-image:linear-gradient(90deg,#0f4496 50%,#fff 50%);background-size:4px 12px"></div>
<div class="t" style="left:1046.50px;top:486.76px;font-size:16px;color:#000;">Bananier</div>
<div style="position:absolute;left:817px;top:510px;width:207px;height:22px;background:#aee595;border:1px solid #000;box-sizing:border-box"></div>
<div style="position:absolute;left:819px;top:515px;width:203px;height:12px;background-image:linear-gradient(90deg,#0f4496 50%,#fff 50%);background-size:4px 12px"></div>
<div class="t" style="left:1034.50px;top:512.76px;font-size:16px;color:#000;">Bambous</div>
<div class="t" style="left:1482.32px;top:539.66px;font-size:16px;color:#000;">Salon extérieur</div>
<div style="position:absolute;left:1326px;top:562px;width:61px;height:22px;background:#ffffff;border:1px solid #000;box-sizing:border-box"></div>
<div class="t" style="left:1397.50px;top:564.76px;font-size:16px;color:#000;">Table</div>
<div style="position:absolute;left:1374px;top:588px;width:50px;height:22px;background:#ffffff;border:1px solid #000;box-sizing:border-box"></div>
<div class="t" style="left:1434.50px;top:590.76px;font-size:16px;color:#000;">Chaises</div>
<div style="position:absolute;left:1411px;top:614px;width:61px;height:22px;background:#ffffff;border:1px solid #000;box-sizing:border-box"></div>
<div class="t" style="left:1482.50px;top:616.76px;font-size:16px;color:#000;">Poufs</div>
<div class="t" style="left:1894.30px;top:643.66px;font-size:16px;color:#000;">Piscine</div>
<div style="position:absolute;left:1605px;top:666px;width:158px;height:22px;background:#ffffff;border:1px solid #000;box-sizing:border-box"></div>
<div class="t" style="left:1773.50px;top:668.76px;font-size:16px;color:#000;">Filtre</div>
<div style="position:absolute;left:1665px;top:692px;width:134px;height:22px;background:#ffffff;border:1px solid #000;box-sizing:border-box"></div>
<div class="t" style="left:1809.50px;top:694.76px;font-size:16px;color:#000;">Moteur</div>
<div style="position:absolute;left:1750px;top:718px;width:134px;height:22px;background:#ffffff;border:1px solid #000;box-sizing:border-box"></div>
<div class="t" style="left:1894.50px;top:720.76px;font-size:16px;color:#000;">Produits</div>
<div style="position:absolute;left:1329px;top:196px;width:2px;height:560px;background:#f00;z-index:7"></div>
<svg style="position:absolute;left:0;top:0;z-index:4" width="1890" height="756"><path d="M1193.6,213.0 L1197.1,209.5 L1273.1,209.5 L1277.4,204.9 L1281.7,209.5 L1357.8,209.5 L1361.3,213.0" fill="none" stroke="#000" stroke-width="3.2" stroke-linejoin="miter" stroke-linecap="square"/><path d="M1205.7,239.0 L1209.2,235.5 L1248.9,235.5 L1253.2,230.9 L1257.5,235.5 L1297.2,235.5 L1300.7,239.0" fill="none" stroke="#000" stroke-width="3.2" stroke-linejoin="miter" stroke-linecap="square"/><path d="M1193.6,317.0 L1197.1,313.5 L1273.1,313.5 L1277.4,308.9 L1281.7,313.5 L1357.8,313.5 L1361.3,317.0" fill="none" stroke="#000" stroke-width="3.2" stroke-linejoin="miter" stroke-linecap="square"/><path d="M818.0,421.0 L821.5,417.5 L1345.8,417.5 L1350.1,412.9 L1354.4,417.5 L1878.8,417.5 L1882.3,421.0" fill="none" stroke="#000" stroke-width="3.2" stroke-linejoin="miter" stroke-linecap="square"/><path d="M818.0,447.0 L821.5,443.5 L921.8,443.5 L926.1,438.9 L930.4,443.5 L1030.6,443.5 L1034.1,447.0" fill="none" stroke="#000" stroke-width="3.2" stroke-linejoin="miter" stroke-linecap="square"/><path d="M1326.9,551.0 L1330.4,547.5 L1394.3,547.5 L1398.6,542.9 L1402.9,547.5 L1466.8,547.5 L1470.3,551.0" fill="none" stroke="#000" stroke-width="3.2" stroke-linejoin="miter" stroke-linecap="square"/><path d="M1605.6,655.0 L1609.1,651.5 L1739.7,651.5 L1744.0,646.9 L1748.3,651.5 L1878.8,651.5 L1882.3,655.0" fill="none" stroke="#000" stroke-width="3.2" stroke-linejoin="miter" stroke-linecap="square"/></svg>
<svg style="position:absolute;left:0;top:0;z-index:6" width="1890" height="134"><g transform="translate(0,0)"><rect x="2.8" y="5.8" width="22.3" height="22.3" fill="#fff" stroke="#444" stroke-width="1.5"/><line x1="2.8" y1="9.7" x2="25.1" y2="9.7" stroke="#444" stroke-width="1.5"/><line x1="8.9" y1="5.8" x2="8.9" y2="28.1" stroke="#444" stroke-width="1.5"/><rect x="5.1" y="12.5" width="3.6" height="1.2" fill="#555"/><rect x="5.1" y="15.500000000000002" width="3.6" height="1.2" fill="#555"/><rect x="5.1" y="18.5" width="3.6" height="1.2" fill="#555"/><rect x="5.1" y="21.4" width="3.6" height="1.2" fill="#555"/><rect x="5.1" y="24.4" width="3.6" height="1.2" fill="#555"/><rect x="11" y="12.5" width="10.600000000000001" height="1.2" fill="#555"/><rect x="11.4" y="15.500000000000002" width="6.799999999999999" height="1.2" fill="#3d85d8"/><rect x="14.4" y="18.5" width="7.200000000000001" height="1.2" fill="#3d85d8"/><rect x="15.5" y="19.8" width="10.5" height="9.5" fill="#f3f1f3"/><polyline points="16.9,24.1 19.9,27.5 25.4,20.7" fill="none" stroke="#4caf50" stroke-width="2.2"/></g><g transform="translate(47,40)"><rect x="6.1" y="4.8" width="27.799999999999997" height="27.8" rx="2" fill="#fff"/><path d="M33.9,30.400000000000002 L33.9,7.0 Q33.9,4.8 31.7,4.8 L8.3,4.8 Q6.1,4.8 6.1,7.0 L6.1,30.400000000000002 Q6.1,32.6 8.3,32.6 L31.7,32.6" fill="none" stroke="#7a7a7a" stroke-width="1.6"/><line x1="6.1" y1="10.8" x2="33.9" y2="10.8" stroke="#7a7a7a" stroke-width="1.6"/><line x1="12" y1="4.8" x2="12" y2="32.6" stroke="#7a7a7a" stroke-width="1.6"/><rect x="8.3" y="13.0" width="3.6999999999999993" height="1.6" fill="#6a6a6a"/><rect x="9.3" y="17.0" width="2.6999999999999993" height="1.6" fill="#6a6a6a"/><rect x="8.3" y="20.8" width="3.6999999999999993" height="1.6" fill="#6a6a6a"/><rect x="9.3" y="24.599999999999998" width="2.6999999999999993" height="1.6" fill="#6a6a6a"/><rect x="8.3" y="28.099999999999998" width="3.6999999999999993" height="1.6" fill="#6a6a6a"/><rect x="14.3" y="13" width="18.1" height="1.5" fill="#cfcfcf"/><rect x="14.3" y="16.95" width="10.5" height="1.7" fill="#6f6f6f"/><rect x="19.1" y="20.3" width="10.799999999999997" height="2.0" fill="#3d85d8"/><rect x="21.3" y="24.5" width="2.8000000000000007" height="2.0" fill="#3d85d8"/><rect x="15.2" y="28.200000000000003" width="8.900000000000002" height="1.8" fill="#6f6f6f"/><rect x="25" y="24" width="11" height="11" fill="#d3d3d3"/><polyline points="25.2,29.1 28.3,32.6 34.4,25.3" fill="none" stroke="#4caf50" stroke-width="2.3"/></g><g transform="translate(176,40)"><rect x="6.1" y="4.8" width="27.799999999999997" height="27.8" rx="2" fill="#fff"/><path d="M33.9,18.8 L33.9,7.0 Q33.9,4.8 31.7,4.8 L8.3,4.8 Q6.1,4.8 6.1,7.0 L6.1,30.400000000000002 Q6.1,32.6 8.3,32.6 L19.8,32.6" fill="none" stroke="#7a7a7a" stroke-width="1.6"/><line x1="6.1" y1="10.8" x2="33.9" y2="10.8" stroke="#7a7a7a" stroke-width="1.6"/><line x1="12" y1="4.8" x2="12" y2="32.6" stroke="#7a7a7a" stroke-width="1.6"/><rect x="8.3" y="13.0" width="3.6999999999999993" height="1.6" fill="#6a6a6a"/><rect x="9.3" y="17.0" width="2.6999999999999993" height="1.6" fill="#6a6a6a"/><rect x="8.3" y="20.8" width="3.6999999999999993" height="1.6" fill="#6a6a6a"/><rect x="9.3" y="24.599999999999998" width="2.6999999999999993" height="1.6" fill="#6a6a6a"/><rect x="8.3" y="28.099999999999998" width="3.6999999999999993" height="1.6" fill="#6a6a6a"/><rect x="14.3" y="13" width="18.1" height="1.5" fill="#cfcfcf"/><rect x="14.3" y="16.95" width="10.5" height="1.7" fill="#6f6f6f"/><rect x="17.8" y="20.75" width="5.099999999999998" height="1.7" fill="#3d85d8"/><rect x="17.8" y="24.549999999999997" width="5.099999999999998" height="1.7" fill="#3d85d8"/><rect x="15.3" y="28.049999999999997" width="4.5" height="1.7" fill="#6f6f6f"/><circle cx="28.9" cy="22.6" r="1.9" fill="none" stroke="#3d85d8" stroke-width="1.3"/><path d="M23.6,32.4 Q24,26.6 28.9,26.6 Q33.8,26.6 34.2,32.4 Z" fill="none" stroke="#3d85d8" stroke-width="1.3"/></g><g transform="translate(286,40)"><polygon points="6.5,28.1 22.6,10.8 27.9,16.1 11.8,32.2" fill="#4a8fdb"/><polygon points="6.5,28.1 11.8,32.2 4.3,33.6" fill="#777"/><polygon points="25.1,8.3 28.6,4.3 33.9,9.3 30.2,13.6" fill="#b8983c"/></g><g transform="translate(375,40)"><path d="M7.5,13 L13.3,13.9 C11.7,11.6 11.9,8.2 13.8,6.8 C15.6,5.4 20.6,5.3 22.4,6.9 C24.1,8.4 24.2,11.6 22.3,13.9 L31,12.9 L31.2,19.4 C29.5,17.3 26.5,17.1 24.8,19 C22.8,21.3 23,26 25.5,27.8 C27.3,29 29.8,28.3 31.2,25.6 L31.2,30.3 Q31.2,31.8 29.7,31.8 L9,31.8 Q7.5,31.8 7.5,30.3 Z" fill="none" stroke="#3e86d6" stroke-width="2.2" stroke-linejoin="round"/></g><g transform="translate(477,40)"><rect x="18.9" y="5" width="13.8" height="5.6" rx="2.8" fill="#d2d2d2" stroke="#7a7a7a" stroke-width="1.4"/><rect x="6" y="19" width="14.4" height="5.2" rx="2.6" fill="#d2d2d2" stroke="#7a7a7a" stroke-width="1.4"/><path d="M18.9,8.3 L9.5,8.3 L9.5,15" fill="none" stroke="#7a7a7a" stroke-width="1.2"/><polygon points="6.8,14.6 12.6,14.6 9.6,17.9" fill="#7a7a7a"/><path d="M23.6,25.6 L31.7,33.2 M23.6,33.2 L31.7,25.6" stroke="#c41e1e" stroke-width="2.4"/></g><g transform="translate(578,40)"><rect x="6.1" y="4.8" width="27.799999999999997" height="18.7" rx="2" fill="#fff"/><path d="M6.1,23.5 L6.1,7.0 Q6.1,4.8 8.3,4.8 L31.7,4.8 Q33.9,4.8 33.9,7.0 L33.9,23.5" fill="none" stroke="#7a7a7a" stroke-width="1.6"/><line x1="6.1" y1="10.8" x2="33.9" y2="10.8" stroke="#7a7a7a" stroke-width="1.6"/><line x1="12" y1="4.8" x2="12" y2="23.5" stroke="#7a7a7a" stroke-width="1.6"/><rect x="8.3" y="13.0" width="3.6999999999999993" height="1.6" fill="#6a6a6a"/><rect x="9.3" y="17.0" width="2.6999999999999993" height="1.6" fill="#6a6a6a"/><rect x="8.3" y="20.8" width="3.6999999999999993" height="1.6" fill="#6a6a6a"/><rect x="14.3" y="13" width="18.1" height="1.5" fill="#cfcfcf"/><rect x="14.3" y="16.95" width="10.5" height="1.7" fill="#6f6f6f"/><rect x="19.1" y="20.6" width="10.799999999999997" height="2.0" fill="#3d85d8"/><polygon points="6.5,29.4 12.3,24.6 12.3,27.4 27.9,27.4 27.9,24.6 33.9,29.4 27.9,33.9 27.9,31.4 12.3,31.4 12.3,33.9" fill="#6daae8" stroke="#3d85d8" stroke-width="1"/></g><g transform="translate(675,40)"><path d="M20.4,33.6 L11.2,20.5 A10.6,10.6 0 1 1 29.6,20.5 Z" fill="#6fa9e6" stroke="#3d85d8" stroke-width="1.2" stroke-linejoin="round"/><circle cx="20.4" cy="14.8" r="5" fill="#fff" stroke="#3d85d8" stroke-width="1.2"/></g><g transform="translate(771,40)"><rect x="6.1" y="4.8" width="27.799999999999997" height="27.8" rx="2" fill="#fff"/><path d="M33.9,24.9 L33.9,7.0 Q33.9,4.8 31.7,4.8 L8.3,4.8 Q6.1,4.8 6.1,7.0 L6.1,30.400000000000002 Q6.1,32.6 8.3,32.6 L25.9,32.6" fill="none" stroke="#7a7a7a" stroke-width="1.6"/><line x1="6.1" y1="10.8" x2="33.9" y2="10.8" stroke="#7a7a7a" stroke-width="1.6"/><line x1="12" y1="4.8" x2="12" y2="32.6" stroke="#7a7a7a" stroke-width="1.6"/><rect x="8.3" y="13.0" width="3.6999999999999993" height="1.6" fill="#6a6a6a"/><rect x="9.3" y="17.0" width="2.6999999999999993" height="1.6" fill="#6a6a6a"/><rect x="8.3" y="20.8" width="3.6999999999999993" height="1.6" fill="#6a6a6a"/><rect x="9.3" y="24.599999999999998" width="2.6999999999999993" height="1.6" fill="#6a6a6a"/><rect x="8.3" y="28.099999999999998" width="3.6999999999999993" height="1.6" fill="#6a6a6a"/><rect x="14.3" y="13" width="18.1" height="1.5" fill="#cfcfcf"/><rect x="14.3" y="16.95" width="10.5" height="1.7" fill="#6f6f6f"/><rect x="19.1" y="20.6" width="10.799999999999997" height="2.0" fill="#3d85d8"/><rect x="21.1" y="24.4" width="2.799999999999997" height="2.0" fill="#3d85d8"/><rect x="15.1" y="28.1" width="6" height="3.6" fill="#707070"/><polygon points="24.1,29 29.1,29 29.1,26.9 34.9,30.2 29.1,33.7 29.1,31.4 24.1,31.4" fill="#4a9e46"/></g><g transform="translate(864,40)"><path d="M12.1,17.1 L12.1,6 Q12.1,4.3 13.8,4.3 L26.9,4.3 Q28.6,4.3 28.6,6 L28.6,17.1" fill="#fff" stroke="#7a7a7a" stroke-width="1.5"/><line x1="14.6" y1="4.5" x2="14.6" y2="17" stroke="#7a7a7a" stroke-width="1.2"/><line x1="17.3" y1="4.5" x2="17.3" y2="17" stroke="#7a7a7a" stroke-width="1.2"/><rect x="19.1" y="7.700000000000001" width="5.799999999999997" height="1.2" fill="#3d85d8"/><rect x="19.1" y="10.35" width="5.799999999999997" height="1.5" fill="#888"/><rect x="19.1" y="13.0" width="5.799999999999997" height="1.2" fill="#666"/><rect x="8.5" y="13.6" width="3.5" height="4" rx="1" fill="#eee" stroke="#7a7a7a" stroke-width="1.2"/><rect x="28.7" y="13.6" width="3.5" height="4" rx="1" fill="#eee" stroke="#7a7a7a" stroke-width="1.2"/><rect x="5.9" y="17.4" width="28.2" height="12.8" rx="2.2" fill="#fff" stroke="#7a7a7a" stroke-width="1.5"/><rect x="8" y="30.2" width="24.2" height="3.2" rx="1" fill="#787878"/><circle cx="10.1" cy="21.6" r="1" fill="#c82020"/><circle cx="14.1" cy="21.6" r="1" fill="#3a9a3a"/><rect x="9" y="25.55" width="12.100000000000001" height="1.1" fill="#d0a050"/></g><g transform="translate(957,40)"><rect x="6.1" y="4.8" width="27.799999999999997" height="27.8" rx="2" fill="#fff"/><path d="M33.9,20.1 L33.9,7.0 Q33.9,4.8 31.7,4.8 L8.3,4.8 Q6.1,4.8 6.1,7.0 L6.1,30.400000000000002 Q6.1,32.6 8.3,32.6 L22.6,32.6" fill="none" stroke="#7a7a7a" stroke-width="1.6"/><line x1="6.1" y1="10.8" x2="33.9" y2="10.8" stroke="#7a7a7a" stroke-width="1.6"/><line x1="12" y1="4.8" x2="12" y2="32.6" stroke="#7a7a7a" stroke-width="1.6"/><rect x="8.3" y="13.0" width="3.6999999999999993" height="1.6" fill="#6a6a6a"/><rect x="9.3" y="17.0" width="2.6999999999999993" height="1.6" fill="#6a6a6a"/><rect x="8.3" y="20.8" width="3.6999999999999993" height="1.6" fill="#6a6a6a"/><rect x="9.3" y="24.599999999999998" width="2.6999999999999993" height="1.6" fill="#6a6a6a"/><rect x="8.3" y="28.099999999999998" width="3.6999999999999993" height="1.6" fill="#6a6a6a"/><rect x="14.3" y="13" width="18.1" height="1.5" fill="#cfcfcf"/><rect x="14.3" y="16.95" width="13.3" height="1.7" fill="#6f6f6f"/><rect x="16.1" y="20.6" width="6.799999999999997" height="2.0" fill="#3d85d8"/><rect x="18.1" y="24.4" width="1.5" height="2.0" fill="#3d85d8"/><rect x="15.3" y="28.049999999999997" width="5.599999999999998" height="1.7" fill="#6f6f6f"/><rect x="27.7" y="21.7" width="2.4" height="3" fill="#3d85d8" transform="rotate(0,28.9,27.9)"/><rect x="27.7" y="21.7" width="2.4" height="3" fill="#3d85d8" transform="rotate(45,28.9,27.9)"/><rect x="27.7" y="21.7" width="2.4" height="3" fill="#3d85d8" transform="rotate(90,28.9,27.9)"/><rect x="27.7" y="21.7" width="2.4" height="3" fill="#3d85d8" transform="rotate(135,28.9,27.9)"/><rect x="27.7" y="21.7" width="2.4" height="3" fill="#3d85d8" transform="rotate(180,28.9,27.9)"/><rect x="27.7" y="21.7" width="2.4" height="3" fill="#3d85d8" transform="rotate(225,28.9,27.9)"/><rect x="27.7" y="21.7" width="2.4" height="3" fill="#3d85d8" transform="rotate(270,28.9,27.9)"/><rect x="27.7" y="21.7" width="2.4" height="3" fill="#3d85d8" transform="rotate(315,28.9,27.9)"/><circle cx="28.9" cy="27.9" r="3.6" fill="none" stroke="#3d85d8" stroke-width="2.2"/></g><circle cx="1077.5" cy="55.2" r="9.399999999999999" fill="#fff" stroke="#7a7a7a" stroke-width="1.6"/><line x1="1084.86" y1="62.69" x2="1093.5" y2="71.5" stroke="#7a7a7a" stroke-width="2.8" stroke-linecap="round"/><line x1="1084.86" y1="62.69" x2="1093.5" y2="71.5" stroke="#d8d8d8" stroke-width="0.9" stroke-linecap="round"/><path d="M1073,55.3 L1082,55.3 M1077.5,50.8 L1077.5,59.8" stroke="#3d85d8" stroke-width="2.2"/><circle cx="1201.9" cy="56.7" r="9.0" fill="#fff" stroke="#7a7a7a" stroke-width="1.6"/><line x1="1209.00" y1="63.89" x2="1218" y2="73" stroke="#7a7a7a" stroke-width="2.8" stroke-linecap="round"/><line x1="1209.00" y1="63.89" x2="1218" y2="73" stroke="#d8d8d8" stroke-width="0.9" stroke-linecap="round"/><path d="M1197.5,56.7 L1206.3,56.7" stroke="#3d85d8" stroke-width="2.2"/><circle cx="1358.6" cy="57.5" r="11.5" fill="#fff" stroke="#7a7a7a" stroke-width="1.6"/><line x1="1367.48" y1="66.44" x2="1374" y2="73" stroke="#7a7a7a" stroke-width="2.8" stroke-linecap="round"/><line x1="1367.48" y1="66.44" x2="1374" y2="73" stroke="#d8d8d8" stroke-width="0.9" stroke-linecap="round"/><polygon points="1350.5,57.5 1354.5,53.8 1354.5,56.3 1362.7,56.3 1362.7,53.8 1366.7,57.5 1362.7,61.2 1362.7,58.7 1354.5,58.7 1354.5,61.2" fill="#5a9de0" stroke="#3d85d8" stroke-width="0.8"/><g transform="translate(1530,40)"><path d="M34.1,22.6 L34.1,7 Q34.1,4.9 32,4.9 L8.2,4.9 Q6.1,4.9 6.1,7 L6.1,30.7 Q6.1,32.8 8.2,32.8 L18.6,32.8" fill="none" stroke="#3d85d8" stroke-width="1.6"/><path d="M20.1,19.1 L12.1,10.8 M20.1,19.1 L28.6,10.8 M20.1,19.1 L12.1,27.1" stroke="#4a9e46" stroke-width="1.2"/><circle cx="20.1" cy="19.1" r="4.6" fill="#6aa6e6" stroke="#3d85d8" stroke-width="1"/><circle cx="12.1" cy="10.8" r="2.6" fill="#fff" stroke="#4a9e46" stroke-width="1.3"/><circle cx="28.6" cy="10.8" r="2.6" fill="#fff" stroke="#4a9e46" stroke-width="1.3"/><circle cx="12.1" cy="27.1" r="2.6" fill="#fff" stroke="#4a9e46" stroke-width="1.3"/><path d="M35.9,24.4 Q28,24.2 24,29.5" fill="none" stroke="#3d85d8" stroke-width="2.4"/><polygon points="20.4,27.1 20.6,34.7 27.1,30.4" fill="#3d85d8"/></g><line x1="1736" y1="16.5" x2="1751" y2="16.5" stroke="#111" stroke-width="1.2"/><rect x="1805.6" y="12.9" width="10.8" height="10.8" rx="1.5" fill="none" stroke="#111" stroke-width="1.2"/><path d="M1808.5,9.6 L1817,9.6 Q1819.5,9.6 1819.5,12 L1819.5,20.5" fill="none" stroke="#111" stroke-width="1.2"/><path d="M1876.2,9.4 L1891,24.2 M1876.2,24.2 L1891,9.4" stroke="#111" stroke-width="1.3"/></svg>
</body></html>
